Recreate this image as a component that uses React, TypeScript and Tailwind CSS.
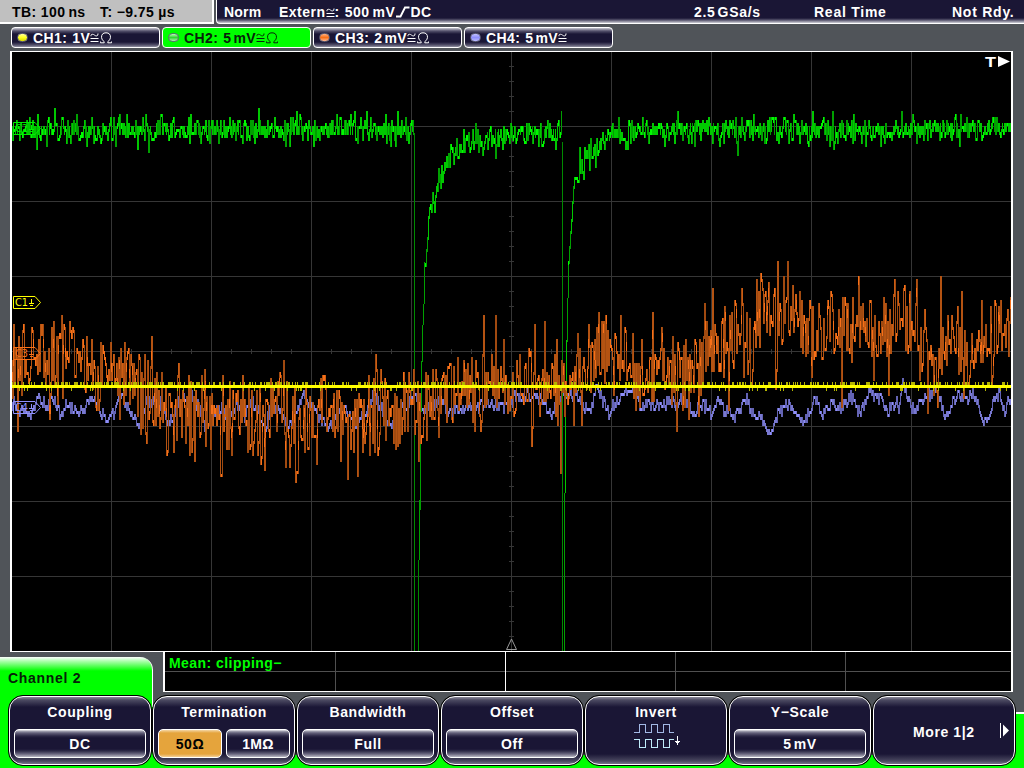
import React from "react";

type Pt = [number, number];
type Band = [number, number, number];

const LEFT = 12;
const RIGHT = 1011;

function makeRandom(seed: number) {
  let s = seed;
  return () => {
    s = (s * 1664525 + 1013904223) >>> 0;
    return s / 4294967296;
  };
}

function lerp(points: Pt[], x: number): number {
  if (x <= points[0][0]) return points[0][1];
  for (let i = 1; i < points.length; i++) {
    if (x <= points[i][0]) {
      const [x0, y0] = points[i - 1];
      const [x1, y1] = points[i];
      return y0 + ((y1 - y0) * (x - x0)) / (x1 - x0);
    }
  }
  return points[points.length - 1][1];
}

const snap = (y: number) => Math.round(y / 3) * 3;

// Splits vertical column segments into a few intensity classes.
class Shades {
  paths: string[] = ["", "", "", ""];
  add(shade: number, x: number, y0: number, y1: number) {
    this.paths[shade] += `M${x} ${y0}h1V${y1}h-1z`;
  }
}

// ---- channel 3 (orange) -------------------------------------------------
const orangeBand: Band[] = [
  [12, 335, 395], [20, 345, 395], [32, 335, 375], [45, 338, 385], [60, 330, 390], [72, 330, 380],
  [80, 345, 380], [100, 355, 400], [115, 352, 395], [130, 350, 395], [140, 368, 420], [150, 370, 420],
  [165, 382, 435], [180, 390, 435], [195, 385, 440], [210, 390, 430], [220, 385, 445], [235, 385, 425],
  [250, 392, 438], [262, 392, 440], [275, 388, 425], [287, 390, 438], [297, 395, 448], [310, 395, 430],
  [325, 388, 420], [345, 390, 450], [360, 395, 440], [375, 380, 435], [395, 390, 432], [410, 382, 420],
  [420, 380, 430], [435, 375, 420], [450, 370, 412], [465, 370, 405], [480, 365, 410], [495, 360, 400],
  [510, 375, 405], [525, 360, 400], [540, 360, 400], [556, 365, 410], [575, 365, 405], [590, 342, 385],
  [605, 330, 380], [625, 342, 385], [640, 350, 400], [660, 345, 385], [675, 350, 400], [690, 350, 390],
  [702, 330, 385], [712, 300, 355], [720, 325, 370], [735, 320, 360], [748, 320, 370], [758, 300, 345],
  [775, 290, 335], [790, 295, 335], [800, 308, 338], [812, 315, 360], [830, 305, 350], [845, 310, 355],
  [860, 305, 345], [878, 320, 350], [893, 305, 345], [910, 300, 345], [920, 325, 365], [935, 340, 385],
  [945, 325, 350], [958, 328, 365], [970, 340, 375], [985, 315, 358], [1000, 310, 350], [1011, 308, 345],
];
const orangeSpikes: Pt[] = [
  [17, 430], [23, 325], [31, 328], [42, 325], [49, 416], [53, 322], [61, 316], [69, 322], [72, 328], [82, 340],
  [100, 343], [119, 417], [124, 343], [128, 349], [144, 355], [146, 441], [151, 337], [156, 373], [166, 453],
  [173, 450], [178, 364], [189, 453], [194, 459], [204, 370], [210, 447], [220, 474], [221, 474], [231, 453],
  [242, 376], [247, 450], [252, 453], [260, 462], [264, 468], [279, 373], [283, 361], [285, 465], [289, 464],
  [295, 480], [301, 438], [316, 462], [322, 376], [340, 460], [347, 477], [357, 474], [369, 453], [375, 355],
  [377, 453], [395, 447], [399, 442], [403, 373], [413, 370], [418, 460], [425, 373], [438, 435], [449, 363],
  [457, 358], [474, 430], [480, 430], [471, 358], [483, 316], [495, 316], [503, 340], [519, 355], [531, 444],
  [534, 325], [544, 322], [556, 340], [560, 471], [573, 423], [577, 334], [581, 423], [588, 325], [598, 313],
  [605, 316], [615, 337], [620, 316], [625, 330], [641, 340], [652, 313], [661, 328], [672, 337], [676, 430],
  [688, 417], [698, 414], [704, 304], [712, 289], [724, 307], [728, 408], [734, 301], [741, 289], [750, 383],
  [756, 280], [760, 274], [768, 283], [775, 387], [777, 262], [783, 277], [787, 262], [795, 295], [799, 292],
  [809, 301], [811, 375], [818, 304], [827, 301], [831, 295], [841, 405], [852, 298], [858, 277], [869, 300],
  [873, 378], [883, 298], [888, 393], [894, 280], [904, 286], [909, 292], [916, 280], [919, 378], [924, 310],
  [927, 411], [937, 406], [940, 277], [957, 307], [961, 292], [963, 397], [968, 384], [981, 301], [991, 385],
  [995, 304], [1000, 301], [1007, 310], [1010, 298],
];

function orangeTrace(): string[] {
  const rnd = makeRandom(7711);
  const out = new Shades();
  const tops: Pt[] = orangeBand.map((b) => [b[0], b[1]]);
  const lows: Pt[] = orangeBand.map((b) => [b[0], b[2]]);
  const spikes = new Map<number, number>(orangeSpikes);
  let prev = 360;
  for (let x = LEFT; x < RIGHT; x++) {
    const t = lerp(tops, x) - 14;
    const b = lerp(lows, x) + 14;
    const mid = (t + b) / 2;
    let v: number;
    const spike = spikes.get(x);
    if (spike !== undefined) {
      v = spike;
    } else if (rnd() < 0.66) {
      v = prev > mid ? t + (mid - t) * rnd() : mid + (b - mid) * rnd();
    } else {
      v = prev + (rnd() - 0.5) * 22 + (mid - prev) * 0.25;
    }
    const y0 = snap(Math.min(prev, v));
    const y1 = snap(Math.max(prev, v)) + 3;
    const len = y1 - y0;
    out.add(len < 10 ? 3 : len < 24 ? 2 : rnd() < 0.5 ? 1 : 0, x, y0, y1);
    if (len > 20 && rnd() < 0.3) {
      const dy = snap(y0 + rnd() * (len - 15));
      out.add(3, x, dy, dy + 9);
    }
    prev = v;
  }
  return out.paths;
}

// ---- channel 4 (violet) -------------------------------------------------
const violetLine: Pt[] = [
  [12, 402], [20, 408], [32, 413], [38, 395], [45, 405], [54, 397], [59, 413], [66, 401], [76, 411], [84, 405],
  [92, 397], [98, 408], [107, 416], [113, 410], [120, 393], [126, 403], [133, 417], [139, 424], [146, 402],
  [154, 399], [160, 403], [166, 420], [172, 418], [178, 400], [186, 396], [194, 397], [200, 410], [206, 431],
  [213, 410], [220, 408], [228, 416], [235, 402], [244, 415], [250, 398], [258, 410], [265, 423], [272, 403],
  [278, 410], [286, 425], [295, 418], [302, 393], [310, 405], [318, 415], [328, 426], [338, 408], [345, 405],
  [350, 418], [355, 423], [363, 412], [372, 396], [378, 402], [386, 416], [392, 425], [400, 408], [410, 400],
  [415, 392], [420, 408], [430, 405], [440, 397], [446, 410], [455, 410], [461, 405], [475, 405], [490, 402],
  [505, 405], [515, 396], [530, 394], [540, 398], [550, 412], [560, 396], [565, 395], [575, 393], [582, 407],
  [590, 407], [596, 385], [602, 400], [608, 412], [616, 398], [625, 390], [632, 390], [640, 405], [652, 402],
  [660, 407], [668, 398], [675, 402], [683, 397], [693, 412], [700, 406], [706, 405], [711, 413], [716, 396],
  [724, 410], [733, 418], [740, 405], [746, 400], [752, 412], [760, 417], [768, 432], [776, 415], [785, 402],
  [795, 411], [802, 421], [808, 410], [814, 398], [821, 415], [830, 402], [837, 410], [844, 402], [849, 395],
  [858, 410], [864, 405], [869, 390], [876, 399], [881, 396], [887, 410], [894, 400], [898, 404], [902, 383],
  [908, 400], [914, 411], [920, 400], [928, 392], [936, 392], [944, 413], [950, 403], [958, 394], [966, 396],
  [972, 392], [978, 408], [984, 421], [992, 402], [999, 392], [1004, 411], [1009, 397], [1011, 395],
];

function violetTrace(): string[] {
  const rnd = makeRandom(4242);
  const out = new Shades();
  let prev = 402;
  for (let x = LEFT; x < RIGHT; x++) {
    const v = snap(lerp(violetLine, x) + (rnd() - 0.5) * 12);
    const y0 = Math.min(prev, v);
    const y1 = Math.max(prev, v) + 3;
    out.add(y1 - y0 < 4 ? 3 : y1 - y0 < 7 ? 2 : 1, x, y0, y1);
    prev = v;
  }
  return out.paths;
}

// ---- channel 2 (green) --------------------------------------------------
const greenA: Pt[] = [
  [425, 266], [426, 250], [427, 238], [428, 216], [429, 208], [430, 204], [432, 196], [436, 192], [438, 184],
  [440, 170], [446, 165], [449, 153], [455, 151], [462, 145], [470, 142], [480, 138], [490, 135], [505, 133],
  [520, 130], [540, 132], [562, 132],
];
const greenB: Pt[] = [
  [568, 262], [569, 246], [570, 232], [571, 219], [572, 202], [573, 188], [575, 181], [578, 168], [582, 166],
  [585, 154], [592, 152], [598, 143], [605, 139], [612, 134], [625, 132], [650, 130], [700, 128], [800, 130],
  [900, 129], [1011, 127],
];

function greenTrace(): string[] {
  const rnd = makeRandom(9091);
  const out = new Shades();
  let prev = 129;
  for (let x = LEFT; x < RIGHT; x++) {
    if ((x > 413 && x < 425) || (x > 561 && x < 568)) {
      prev = x < 430 ? 263 : 262;
      continue;
    }
    const base = x <= 413 ? 129 : x < 562 ? lerp(greenA, x) : lerp(greenB, x);
    const steep = (x > 424 && x < 431) || (x > 567 && x < 574);
    const g = rnd() + rnd() + rnd() - 1.5;
    let v = base - 1 + (steep ? 0 : g * 14);
    if (!steep && rnd() < 0.09) v += rnd() < 0.5 ? -7 : 8;
    v = snap(v);
    let y0 = Math.min(prev, v);
    let y1 = Math.max(prev, v) + 3;
    if (!steep && rnd() < 0.4) {
      y0 = Math.min(y0, snap(base - 4));
      y1 = Math.max(y1, snap(base + 5));
    }
    const len = y1 - y0;
    out.add(len < 7 ? 3 : len < 13 ? 2 : rnd() < 0.6 ? 1 : 2, x, y0, y1);
    prev = v;
  }
  out.add(0, 414, 133, 651);
  out.add(0, 418, 560, 651);
  out.add(1, 419, 500, 560);
  out.add(1, 420, 412, 510);
  out.add(1, 421, 361, 412);
  out.add(1, 422, 325, 362);
  out.add(1, 423, 304, 325);
  out.add(1, 424, 262, 304);
  out.add(0, 562, 142, 651);
  out.add(1, 564, 493, 651);
  out.add(2, 565, 397, 493);
  out.add(2, 566, 340, 397);
  out.add(1, 567, 298, 342);
  out.add(1, 568, 262, 298);
  return out.paths;
}

// ---- channel 1 (yellow) -------------------------------------------------
function yellowNoise(): string {
  const rnd = makeRandom(313);
  let d = "";
  for (let x = LEFT; x < RIGHT; x++) {
    const r = rnd();
    if (r < 0.36) d += `M${x} 382h1v3h-1z`;
    else if (r < 0.44) d += `M${x} 388h1v3h-1z`;
  }
  return d;
}

const orange = orangeTrace();
const violet = violetTrace();
const green = greenTrace();
const yellow = yellowNoise();

const greenShades = ["#008a00", "#00a000", "#00c800", "#00fb00"];
const violetShades = ["#5c5cae", "#6464b4", "#7878d0", "#8f8ffc"];
const orangeShades = ["#a14a10", "#b45312", "#cb5d13", "#f87018"];

function Trace({ paths, shades }: { paths: string[]; shades: string[] }) {
  return (
    <g shapeRendering="crispEdges">
      {paths.map((d, i) => (
        <path key={i} d={d} fill={shades[i]} />
      ))}
    </g>
  );
}

function Flag({ y, color, name }: { y: number; color: string; name: string }) {
  return (
    <g stroke={color} fill="none">
      <path d={`M13.5 ${y - 5.5}H35L40.5 ${y + 0.5}L35 ${y + 6.5}H13.5Z`} />
      <text x={15} y={y + 4} fill={color} stroke="none" fontSize="10" fontWeight="normal" letterSpacing="0" textLength="13" lengthAdjust="spacingAndGlyphs" fontFamily="DejaVu Sans, sans-serif">
        {name}
      </text>
      <path d={`M31.5 ${y - 3}v4.5M29 ${y + 1.5}h5M30 ${y + 3.5}h3`} />
    </g>
  );
}

function Plot() {
  let grid = "";
  for (let x = 111; x < 1011; x += 100) grid += `M${x} 52h1v599h-1z`;
  for (let y = 126; y < 651; y += 75) grid += `M12 ${y}h999v1h-999z`;
  for (let x = 31; x < 1011; x += 20) grid += `M${x} 349h1v5h-1z`;
  for (let y = 66; y < 640; y += 15) grid += `M509 ${y}h5v1h-5z`;
  return (
    <svg viewBox="12 52 999 599" className="block h-[599px] w-[999px]">
      <path d={grid} fill="#363636" shapeRendering="crispEdges" />
      <Trace paths={violet} shades={violetShades} />
      <Trace paths={green} shades={greenShades} />
      <Trace paths={orange} shades={orangeShades} />
      <path d="M12 385h999v3h-999z" fill="#ffff00" shapeRendering="crispEdges" />
      <path d={yellow} fill="#b4b400" shapeRendering="crispEdges" />
      <Flag y={128} color="#00f000" name="C2" />
      <Flag y={302} color="#ffff00" name="C1" />
      <Flag y={353} color="#f87018" name="C3" />
      <Flag y={407} color="#8f8ffc" name="C4" />
      <path d="M511.5 639L506.5 649.5H516.5Z" fill="none" stroke="#9a9a9a" />
      <text x="985" y="67" fill="#fff" fontSize="15" fontWeight="bold" letterSpacing="0" textLength="11" lengthAdjust="spacingAndGlyphs" fontFamily="Liberation Sans, sans-serif">
        T
      </text>
      <path d="M998 56L1010 61.5L998 67Z" fill="#fff" />
    </svg>
  );
}

function Approx() {
  return (
    <svg viewBox="0 0 9 11" className="inline-block h-[11px] w-[9px] shrink-0" fill="none" stroke="currentColor">
      <path d="M1 4.2V3.4Q1 2.3 2.5 2.3Q3.6 2.3 4.5 3.1T6.5 3.9Q8 3.8 8 2V1.5M.5 6.5h8M.5 9.5h8" />
    </svg>
  );
}

function ThinOhm() {
  return (
    <svg viewBox="0 0 12 12" className="ml-px inline-block h-3 w-3 shrink-0" fill="none" stroke="currentColor">
      <path d="M.5 9.5V10.8H4.2V9.6Q1.5 8 1.5 5.3Q1.5 .8 6 .8T10.5 5.3Q10.5 8 7.8 9.6V10.8H11.5V9.5" />
    </svg>
  );
}

function ChannelTab(props: { label: string; value: React.ReactNode; ohm?: boolean; led: string; active?: boolean }) {
  const skin = props.active
    ? "bg-[#00ff00] text-[#08220a]"
    : "bg-[linear-gradient(#c8c8d2_0,#54516b_3px,#1a1635_6px,#1a1635_14px,#54516b_17px,#b0b0bc_20px)] text-white";
  return (
    <div className={`flex h-[21px] w-[149px] items-center rounded-[4px] border border-white pl-[5px] ${skin}`}>
      <span className={`h-[9px] w-[11px] shrink-0 rounded-full border border-[#626278] ${props.led}`} />
      <span className="ml-[5px] flex items-center whitespace-pre">
        <span>{props.label}</span>
        <span className="ml-[5px] flex gap-[2px]">{props.value}</span>
        <Approx />
        {props.ohm && <ThinOhm />}
      </span>
    </div>
  );
}

const glossy =
  "bg-[linear-gradient(#f0f0f4_0,#a9a8b6_1px,#625f79_3px,#2b2745_6px,#1a1635_8px,#1a1635_19px,#2e2b48_21px,#69667e_24px,#b9b8c4_27px)]";

function Value({ children }: { children: React.ReactNode }) {
  return (
    <div className={`flex h-[29px] flex-1 items-center justify-center whitespace-pre rounded-[5px] border border-white pt-px ${glossy}`}>
      {children}
    </div>
  );
}

function SoftKey({ title, children }: { title?: string; children?: React.ReactNode }) {
  return (
    <div className="h-[71px] w-36 rounded-[15px] border border-black bg-black">
      <div className="flex h-[69px] flex-col rounded-[14px] border border-white bg-[linear-gradient(#8b8a9a_0,#4c4a62_3px,#1a1635_10px,#1a1635_57px,#4a4860_64px,#77758a_67px)] px-1">
        {title && <div className="h-8 pt-[6px] text-center leading-[18px]">{title}</div>}
        {children}
      </div>
    </div>
  );
}

export default function App() {
  return (
    <div className="flex h-[768px] w-[1024px] flex-col overflow-hidden bg-[#505459] font-['Liberation_Sans',Arial,sans-serif] text-[14px] font-bold leading-4 tracking-[0.6px] text-white">
      <header className="flex h-6 gap-[2px]">
        <div className="flex h-6 w-[214px] border-r-2 border-b-2 border-white bg-[#c0c0c0] pt-1 pl-3 tracking-[0.4px] text-black">
          <span className="w-[88px] whitespace-nowrap">TB: 100<span className="ml-[3px]">ns</span></span>
          <span className="whitespace-nowrap">T: −9.75<span className="ml-[4px] tracking-[0.5px]">µs</span></span>
        </div>
        <div className="flex h-6 flex-1 rounded-bl-[4px] border-b border-l border-white bg-[linear-gradient(#1a1635_18px,#55526b_20px,#d0d0d8_23px)] pt-1 pl-[7px] whitespace-nowrap">
          <span className="w-[55px] tracking-[0.2px]">Norm</span>
          <span className="flex h-4 w-[415px] items-center tracking-[0.5px]">
            <span>Extern</span><Approx /><span>:</span>
            <span className="ml-[5px]">500</span><span className="ml-[3px]">mV</span>
            <svg viewBox="0 0 15 12" className="h-3 w-[15px]" fill="none" stroke="currentColor" strokeWidth="1.9">
              <path d="M1 10.5H5.5L10 1.5H14.5" />
            </svg>
            <span>DC</span>
          </span>
          <span className="w-[120px] tracking-[0.7px]">2.5<span className="ml-[2px]">GSa/s</span></span>
          <span className="w-[138px] tracking-[0.75px]">Real Time</span>
          <span className="tracking-[0.75px]">Not Rdy.</span>
        </div>
      </header>

      <nav className="flex h-[27px] gap-[2px] pt-[3px] pl-[11px] tracking-[0.4px]">
        <ChannelTab label="CH1:" value="1V" ohm led="bg-[linear-gradient(#ffff9a,#ffff20,#d8d800)]" />
        <ChannelTab label="CH2:" value={<><span>5</span><span>mV</span></>} ohm active led="bg-[linear-gradient(#b8ffb8,#30d830,#b0f0b0)]" />
        <ChannelTab label="CH3:" value={<><span>2</span><span>mV</span></>} ohm led="bg-[linear-gradient(#ffb080,#f87018,#ffb890)]" />
        <ChannelTab label="CH4:" value={<><span>5</span><span>mV</span></>} led="bg-[linear-gradient(#c0c0ff,#8f8ffc,#b8b8ff)]" />
      </nav>

      <main className="ml-[10px] h-[601px] w-[1003px] shrink-0 border-x-2 border-y border-white bg-black">
        <Plot />
      </main>

      <section className="flex h-[43px] shrink-0">
        <div className="mt-[5px] w-[153px] rounded-tr-[13px] border-r border-white bg-[linear-gradient(#ffffff_0,#b0ffb0_4px,#00ff00_14px)] pt-[13px] pl-2 tracking-[0.7px] text-[#062008]">
          Channel 2
        </div>
        <div className="ml-[10px] flex h-10 w-[850px] border-r-2 border-b border-l-2 border-white bg-black">
          {["border-[#505050]", "border-white", "border-[#505050]", "border-[#505050]", "border-transparent"].map((c, i) => (
            <div key={i} className={`h-[39px] border-r ${c} ${i === 0 ? "w-[171px] shrink-0" : i === 4 ? "flex-1" : "w-[170px] shrink-0"}`}>
              <div className="h-5 border-b border-[#505050] pt-[3px] pl-1 leading-4 tracking-[0.45px] whitespace-nowrap text-[#00ff00]">
                {i === 0 ? "Mean: clipping−" : ""}
              </div>
            </div>
          ))}
        </div>
      </section>

      <footer className="grid h-[73px] shrink-0 grid-cols-[1024px] grid-rows-[73px]">
        <div className="col-start-1 row-start-1 flex items-end">
          <div className="h-[73px] w-[80px] bg-[#00ff00]" />
          <div className="flex h-[73px] w-[73px] flex-col">
            <div className="h-3 border-r border-white bg-[#00ff00]" />
            <div className="flex-1 bg-[#00ff00]" />
          </div>
          <div className="h-[13px] flex-1 bg-[#00ff00]" />
          <div className="h-[56px] w-[9px] border-t-2 border-white bg-[#00ff00]" />
        </div>
        <div className="col-start-1 row-start-1 flex pl-2">
          <SoftKey title="Coupling">
            <div className="flex"><Value>DC</Value></div>
          </SoftKey>
          <SoftKey title="Termination">
            <div className="flex gap-1">
              <div className="flex h-[29px] flex-1 items-center justify-center rounded-[5px] border border-white bg-[linear-gradient(#f4d6a4_0,#e5a43c_3px,#e5a43c_24px,#f2cf98_27px)] pt-px text-black">
                50Ω
              </div>
              <div className={`flex h-[29px] flex-1 items-center justify-center rounded-[5px] border border-white pt-px tracking-[0.3px] ${glossy}`}>
                1MΩ
              </div>
            </div>
          </SoftKey>
          <SoftKey title="Bandwidth">
            <div className="flex"><Value>Full</Value></div>
          </SoftKey>
          <SoftKey title="Offset">
            <div className="flex"><Value>Off</Value></div>
          </SoftKey>
          <SoftKey title="Invert">
            <svg viewBox="0 0 48 27" className="-mt-[7px] ml-[44px] h-[27px] w-12" fill="none" shapeRendering="crispEdges">
              <path stroke="#a3b9e6" d="M0 10.5H5.5V2.5H11.5V10.5H17.5V2.5H23.5V10.5H29.5V2.5H35.5V10.5H40" />
              <path stroke="#c0ecfa" d="M0 17.5H5.5V25.5H11.5V17.5H17.5V25.5H23.5V17.5H29.5V25.5H35.5V17.5H40" />
              <path stroke="#ffffff" d="M43.5 14V22.5M41 19.5h5M42 20.5h3" />
            </svg>
          </SoftKey>
          <SoftKey title="Y−Scale">
            <div className="flex"><Value>5<span className="w-[2px]" />mV</Value></div>
          </SoftKey>
          <SoftKey>
            <div className="flex h-[67px] items-center pt-[3px] pl-[35px]">
              <span className="w-[87px] tracking-[0.6px] whitespace-nowrap">More 1|2</span>
              <svg viewBox="0 0 10 16" className="-mt-[3px] h-4 w-[10px]">
                <path d="M.5 0V15" stroke="#fff" />
                <path d="M3 1.5L9 7.5L3 13.5Z" fill="#fff" />
              </svg>
            </div>
          </SoftKey>
        </div>
      </footer>
    </div>
  );
}
